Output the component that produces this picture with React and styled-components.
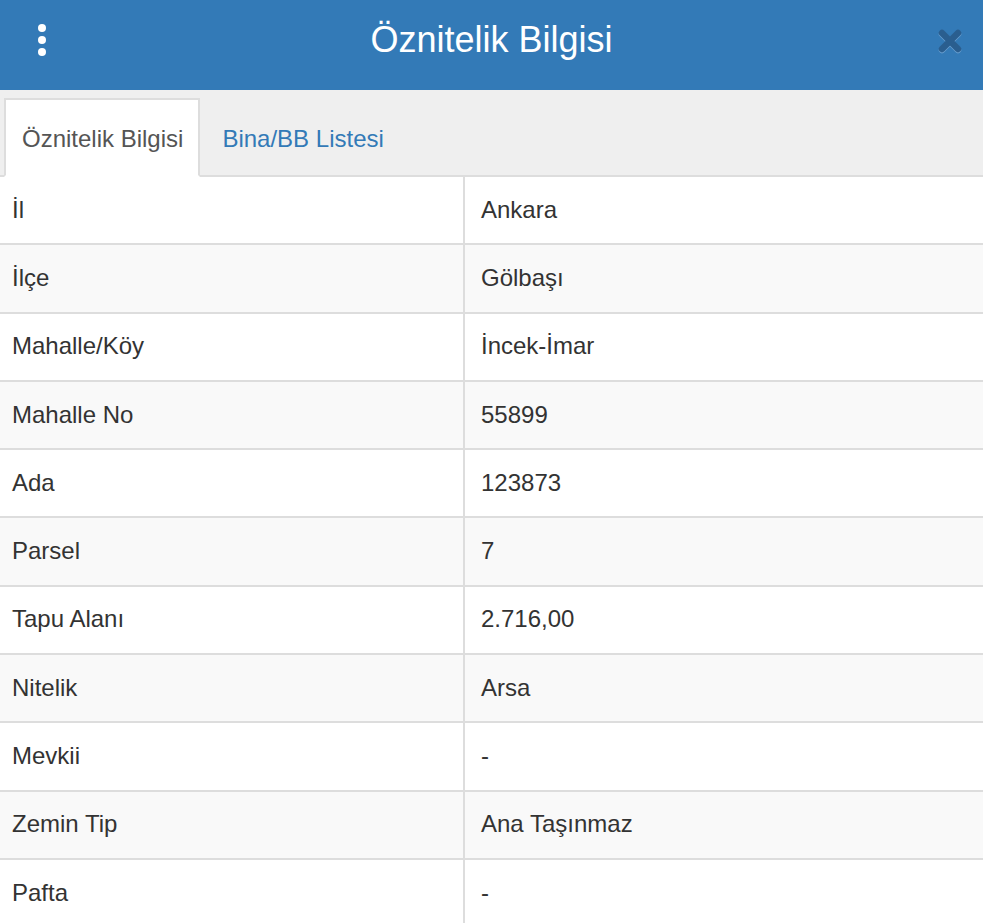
import React from "react";
import styled, { createGlobalStyle } from "styled-components";

const GlobalStyle = createGlobalStyle`
  html, body {
    margin: 0;
    padding: 0;
    background: #fff;
    font-family: "Liberation Sans", Arial, Helvetica, sans-serif;
    color: #333;
  }
  * {
    box-sizing: border-box;
  }
`;

const Wrapper = styled.div`
  width: 983px;
  height: 923px;
  overflow: hidden;
  display: flex;
  flex-direction: column;
`;

const Header = styled.div`
  height: 90px;
  flex-shrink: 0;
  background: #337ab7;
  display: flex;
  align-items: center;
  justify-content: center;
  position: relative;
`;

const Title = styled.h1`
  margin: 0;
  font-size: 36px;
  font-weight: 400;
  color: #fff;
  line-height: 1;
  margin-top: -10px;
`;

const MenuButton = styled.div`
  position: absolute;
  left: 38px;
  top: 24px;
  display: flex;
  flex-direction: column;
  gap: 4px;
  span {
    width: 8px;
    height: 8px;
    border-radius: 50%;
    background: #fff;
  }
`;

const CloseButton = styled.div`
  position: absolute;
  right: 20px;
  top: 28px;
  width: 26px;
  height: 26px;
  svg {
    display: block;
    filter: drop-shadow(0 1px 0 #6a9fd0);
  }
`;

const TabBar = styled.div`
  height: 87px;
  flex-shrink: 0;
  background: #efefef;
  border-bottom: 2px solid #ddd;
  display: flex;
  align-items: flex-end;
  padding-left: 4px;
`;

const Tab = styled.div`
  height: 79px;
  padding: 2px 15px 0 16px;
  margin-right: 4px;
  margin-bottom: -2px;
  display: flex;
  align-items: center;
  font-size: 24px;
  color: ${(p) => (p.active ? "#555" : "#337ab7")};
  background: ${(p) => (p.active ? "#fff" : "transparent")};
  border: 2px solid ${(p) => (p.active ? "#ddd" : "transparent")};
  border-bottom-color: transparent;
`;

const Table = styled.div`
  display: grid;
  grid-template-columns: 463px 1fr;
`;

const Cell = styled.div`
  height: 68.3px;
  border-bottom: 2px solid #ddd;
  display: flex;
  align-items: center;
  font-size: 24px;
  color: #333;
  background: ${(p) => (p.striped ? "#f9f9f9" : "#fff")};
  padding-left: ${(p) => (p.value ? "16px" : "12px")};
  border-left: ${(p) => (p.value ? "2px solid #ddd" : "none")};
  padding-bottom: 1px;
`;

const rows = [
  ["İl", "Ankara"],
  ["İlçe", "Gölbaşı"],
  ["Mahalle/Köy", "İncek-İmar"],
  ["Mahalle No", "55899"],
  ["Ada", "123873"],
  ["Parsel", "7"],
  ["Tapu Alanı", "2.716,00"],
  ["Nitelik", "Arsa"],
  ["Mevkii", "-"],
  ["Zemin Tip", "Ana Taşınmaz"],
  ["Pafta", "-"],
];

const App = () => {
  return (
    <>
      <GlobalStyle />
      <Wrapper>
        <Header>
          <MenuButton>
            <span />
            <span />
            <span />
          </MenuButton>
          <Title>Öznitelik Bilgisi</Title>
          <CloseButton>
            <svg width="26" height="26" viewBox="0 0 26 26">
              <path
                d="M5 5 L21 21 M21 5 L5 21"
                stroke="#2a5e8f"
                strokeWidth="6.5"
                strokeLinecap="round"
              />
            </svg>
          </CloseButton>
        </Header>
        <TabBar>
          <Tab active>Öznitelik Bilgisi</Tab>
          <Tab>Bina/BB Listesi</Tab>
        </TabBar>
        <Table>
          {rows.map((row, index) => (
            <React.Fragment key={index}>
              <Cell striped={index % 2 === 1}>{row[0]}</Cell>
              <Cell striped={index % 2 === 1} value>
                {row[1]}
              </Cell>
            </React.Fragment>
          ))}
        </Table>
      </Wrapper>
    </>
  );
};

export default App;
